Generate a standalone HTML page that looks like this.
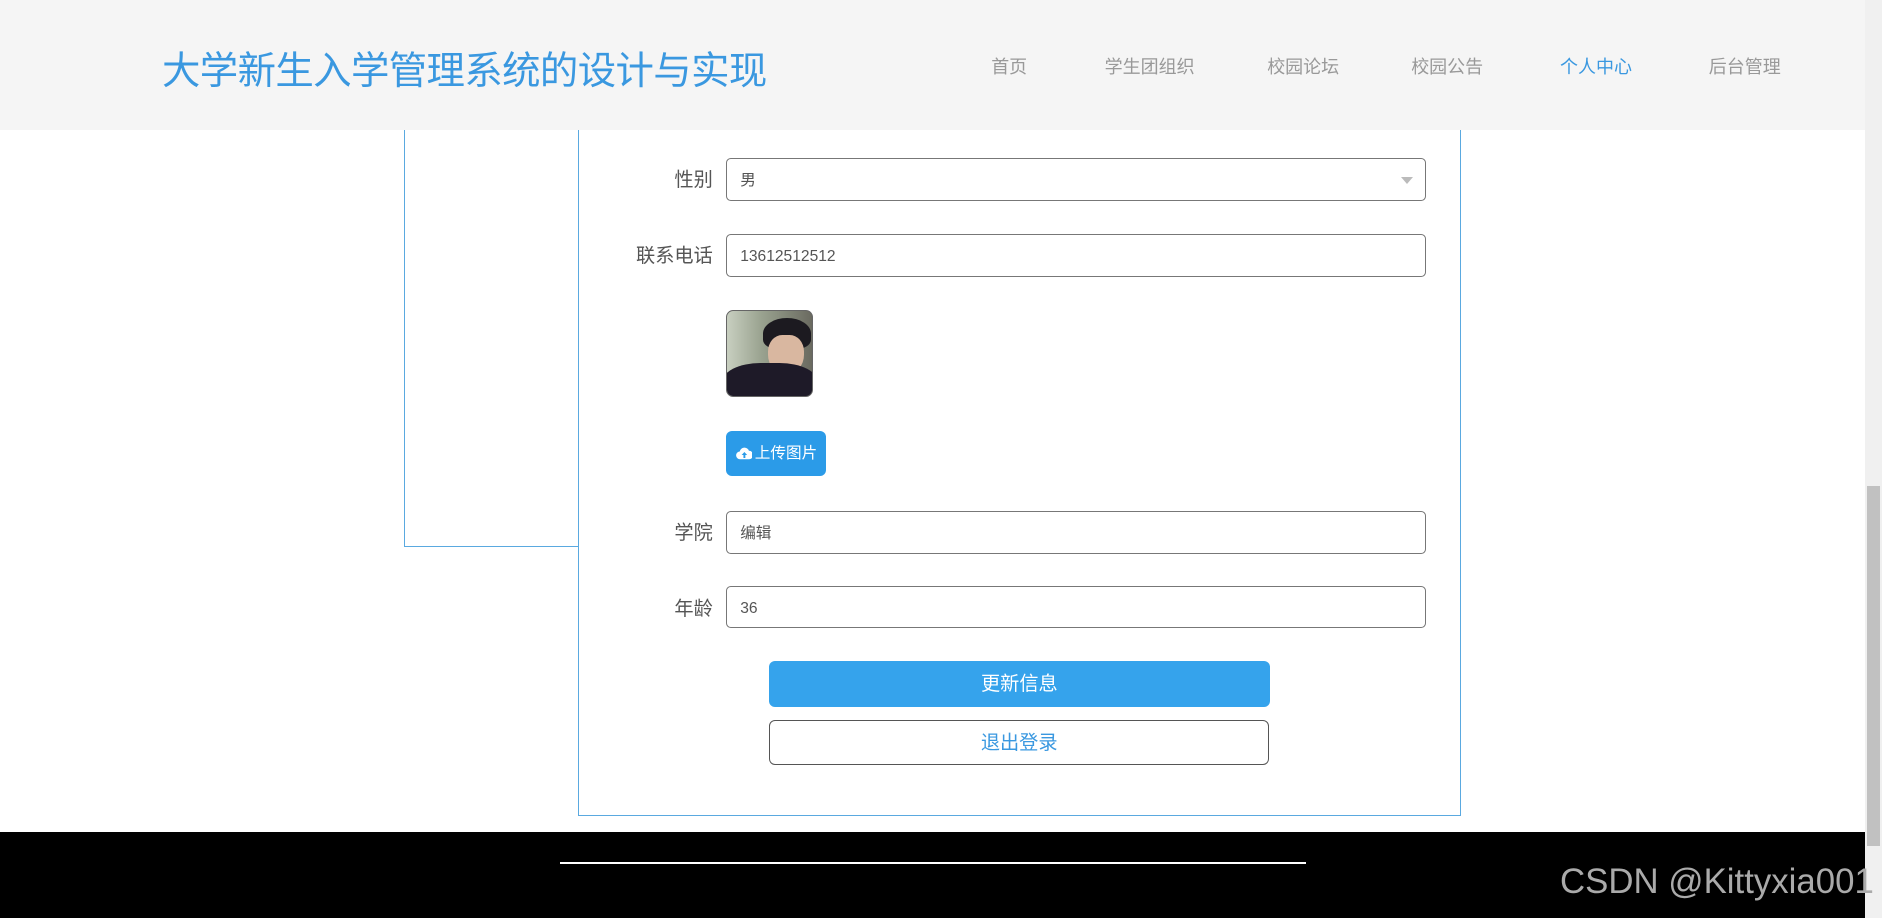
<!DOCTYPE html>
<html><head><meta charset="utf-8">
<style>
html,body{margin:0;padding:0;overflow:hidden;background:#fff;}
#w{zoom:1.2;position:relative;width:1568px;height:765px;font-family:"Liberation Sans","Noto Sans CJK SC",sans-serif;overflow:hidden;}
.abs{position:absolute;}
.hdr{left:0;top:0;width:1554px;height:108px;background:#f5f5f5;z-index:2;}
.title{left:135px;top:33px;font-size:32px;color:#3a98e0;letter-spacing:-0.5px;white-space:nowrap;}
.nav{top:44px;font-size:15px;color:#999;transform:translateX(-50%);white-space:nowrap;}
.lbl{width:120px;left:474px;text-align:right;font-size:16px;color:#555;}
.inp{left:605px;width:582px;height:34px;border:1px solid #777;border-radius:4px;background:#fff;font-size:13px;color:#555;line-height:36px;text-indent:11px;}
</style></head><body><div id="w">
<div class="abs hdr">
 <div class="abs title">大学新生入学管理系统的设计与实现</div>
 <div class="abs nav" style="left:841px">首页</div>
 <div class="abs nav" style="left:958px">学生团组织</div>
 <div class="abs nav" style="left:1086px">校园论坛</div>
 <div class="abs nav" style="left:1206px">校园公告</div>
 <div class="abs nav" style="left:1330px;color:#3a98e0">个人中心</div>
 <div class="abs nav" style="left:1454px">后台管理</div>
</div>
<div class="abs" style="left:337px;top:0;width:145px;height:455px;border:1px solid #5aa9e0;border-top:none;"></div>
<div class="abs" style="left:482px;top:0;width:734px;height:679px;border:1px solid #5aa9e0;border-top:none;background:#fff;"></div>

<div class="abs lbl" style="top:137px">性别</div>
<div class="abs inp" style="top:132px">男<div class="abs" style="right:10px;top:15px;width:0;height:0;border-left:5px solid transparent;border-right:5px solid transparent;border-top:6px solid #bbb;"></div></div>
<div class="abs lbl" style="top:200px">联系电话</div>
<div class="abs inp" style="top:195px">13612512512</div>
<div class="abs" style="left:605px;top:258px;width:71px;height:71px;border:1px solid #666;border-radius:6px;overflow:hidden;background:linear-gradient(90deg,#c8cfc0,#9aa390 40%,#6a6a60);">
 <div class="abs" style="left:30px;top:6px;width:40px;height:26px;background:#1c1a20;border-radius:50% 50% 30% 30%;"></div>
 <div class="abs" style="left:34px;top:20px;width:30px;height:34px;background:#d9b7a0;border-radius:40% 40% 50% 50%;"></div>
 <div class="abs" style="left:-4px;top:44px;width:80px;height:40px;background:#1e1a28;border-radius:40% 40% 0 0;"></div>
</div>
<div class="abs" style="left:605px;top:359px;width:83px;height:38px;background:#2b9be8;border-radius:5px;color:#fff;font-size:13px;line-height:38px;">
 <svg class="abs" style="left:8px;top:13px" width="14" height="12" viewBox="0 0 14 12"><path d="M3.5 11a3.2 3.2 0 0 1-.4-6.4A4 4 0 0 1 10.8 4a3.5 3.5 0 0 1 .2 7z" fill="#fff"/><path d="M7 5l-2.3 2.5h1.5V10h1.6V7.5h1.5z" fill="#2b9be8"/></svg>
 <span class="abs" style="left:24px">上传图片</span></div>
<div class="abs lbl" style="top:431px">学院</div>
<div class="abs inp" style="top:426px">编辑</div>
<div class="abs lbl" style="top:494px">年龄</div>
<div class="abs inp" style="top:488px">36</div>
<div class="abs" style="left:641px;top:551px;width:417px;height:38px;background:#35a3ec;border-radius:5px;color:#fff;font-size:16px;text-align:center;line-height:40px;">更新信息</div>
<div class="abs" style="left:641px;top:600px;width:415px;height:36px;border:1px solid #555;border-radius:5px;color:#3a98e0;font-size:16px;text-align:center;line-height:38px;">退出登录</div>

<div class="abs" style="left:0;top:693px;width:1554px;height:72px;background:#000;">
 <div class="abs" style="left:467px;top:25px;width:621px;height:2px;background:#fff;"></div>
</div>
<div class="abs" style="left:1300px;top:718px;font-size:29px;color:#aaa;white-space:nowrap;z-index:3;">CSDN @Kittyxia001</div>
<div class="abs" style="left:1554px;top:0;width:14px;height:765px;background:#f0f0f0;"></div>
<div class="abs" style="left:1556px;top:405px;width:11px;height:300px;background:#c1c1c1;"></div>
</div></body></html>
